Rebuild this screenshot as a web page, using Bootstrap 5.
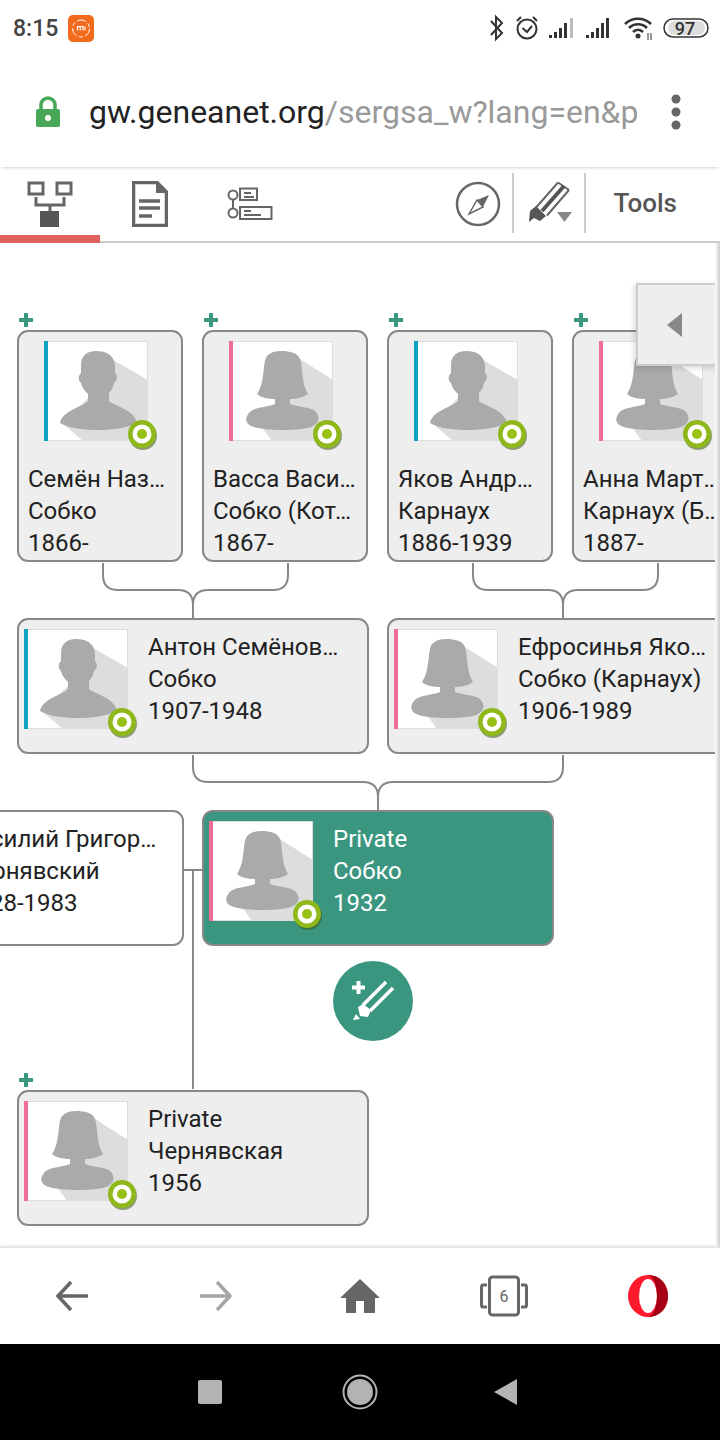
<!DOCTYPE html>
<html lang="en">
<head>
<meta charset="utf-8">
<title>Geneanet tree</title>
<link href="https://cdn.jsdelivr.net/npm/bootstrap@5.3.0/dist/css/bootstrap.min.css" rel="stylesheet">
<style>
html,body{margin:0;width:720px;height:1440px;overflow:hidden;background:#fff;font-family:Roboto,"Noto Sans",sans-serif}
.screen{width:720px;height:1440px}
.status-row{height:56px;padding:0 11px 0 13px;flex:none}
.clock{font-size:23px;font-weight:500;color:#444;line-height:1;width:55px}
.gap-a{margin-left:6px}.gap-b{margin-left:5px}.gap-c{margin-left:9px}.gap-d{margin-left:11px}.gap-e{margin-left:10px}
.url-row{height:111px;flex:none;padding:0 0 0 35px;box-shadow:0 3px 3px -2px rgba(0,0,0,.18);position:relative;z-index:3;background:#fff}
.url-text{font-size:32px;color:#999;width:548px;margin-left:28px;white-space:nowrap;overflow:hidden;line-height:40px}
.url-text b{font-weight:400;color:#222}
.menu-dots{margin-left:33px}
.tab-row{height:76px;flex:none;border-bottom:2px solid #ccc;background:#fff;position:relative;z-index:2}
.tab-item{height:74px;width:100px;position:relative}
.tab-item.on::after{content:"";position:absolute;left:0;right:0;bottom:-2px;height:8px;background:#e0635f}
.tab-tail{padding-right:43px;height:74px}
.tool-cell{height:60px;margin-top:-3px;border-left:2px solid #ccc}
.tool-pen{margin-left:11px;padding:0 10px 0 14px}
.tools-label{font-size:26px;font-weight:500;color:#555;padding-left:27px;line-height:1}
.tree-canvas{height:1004px;flex:none;position:relative;overflow:hidden;background:#fff}
.tree-canvas::after{content:"";position:absolute;top:0;bottom:0;right:0;width:5px;background:linear-gradient(90deg,#fff,#ccc);z-index:4}
.wires{position:absolute;left:0;top:0}
.person{position:absolute;border:2px solid #888;border-radius:11px;background:#eee;color:#222;font-size:24px;line-height:32px}
.person.upright{width:166px;height:232px;padding:9px 0 0 25px}
.person.wide{width:352px;height:136px;padding:9px 0 0 5px;gap:20px}
.person.plain{background:#fff}
.person.self{background:#3b9680;color:#fff}
.person-lines{white-space:nowrap}
.person.upright .person-lines{margin:22px 0 0 -16px;height:96px}
.person.wide .person-lines{margin-top:2px}
.line-clip{display:block;overflow:hidden;text-overflow:ellipsis;white-space:nowrap;width:146px}
.person.wide .line-clip{width:195px}
.portrait{width:104px;height:100px;position:relative;flex:none}
.adder{position:absolute}
.slide-panel{position:absolute;left:636px;top:40px;width:84px;height:83px;background:#eee;border:2px solid #ccc;border-right:0;box-shadow:-2px 2px 6px rgba(0,0,0,.15);z-index:3}
.fab{position:absolute;left:333px;top:718px;width:80px;height:80px;background:#3b9680}
.nav-row{height:97px;flex:none;background:#fff;border-top:1px solid #e5e5e5;box-shadow:0 -1px 3px rgba(0,0,0,.12);position:relative;z-index:3}
.nav-cell{width:144px}
.sys-row{height:96px;flex:none;background:#000}
.sys-cell{width:150px}
.count-num{font-family:Roboto,sans-serif;font-size:16px;fill:#666}
.batt-num{font-family:Roboto,sans-serif;font-size:18px;font-weight:500;fill:#333}
.bar-m,.bar-f{position:absolute;left:0;top:0;width:4px;height:100px}
.bar-m{background:#0ea3bf}.bar-f{background:#ee6d99}
.badge-dot{position:absolute;left:83px;top:78px}
</style>
</head>
<body>
<svg width="0" height="0" style="position:absolute" aria-hidden="true">
<defs>
<symbol id="man" viewBox="0 0 104 100">
<rect width="104" height="100" fill="#fff"/>
<path d="M69 19L104 39V100H39L19 83L60 40Z" fill="#ddd"/>
<path d="M37 24C37 14 44 10 52 10C62 10 70 14 71 24L71 32C74 34 73 40 70 42C69 47 67 50 65 52L65 60C70 65 90 68 93 82C80 88 66 89 53 89C38 89 25 87 16 82C18 70 38 66 44 60L44 53C41 50 38 47 37 42C34 40 34 34 37 32Z" fill="#aaa"/>
<path d="M0 0H104V100H0Z" fill="none" stroke="#ddd" stroke-width="2"/>
</symbol>
<symbol id="woman" viewBox="0 0 104 100">
<rect width="104" height="100" fill="#fff"/>
<path d="M71 18L104 39V100H43L33 86L60 40Z" fill="#ddd"/>
<path d="M36 20C37 13 44 10 52 10C61 10 69 12 71 18C74 26 72 42 79 53C74 57 66 58 61 58L61 63C68 66 82 66 86 70C92 76 90 83 82 86C72 90 36 90 25 86C17 84 15 78 20 72C24 66 40 66 46 63L46 58C40 58 32 57 28 53C35 43 34 28 36 20Z" fill="#aaa"/>
<path d="M0 0H104V100H0Z" fill="none" stroke="#ddd" stroke-width="2"/>
</symbol>
<symbol id="dot" viewBox="0 0 32 32">
<circle cx="16" cy="17" r="14" fill="#3a5a10" opacity=".55"/>
<circle cx="15" cy="15" r="14" fill="#8fb81a"/>
<circle cx="15" cy="15" r="9.5" fill="#fff"/>
<circle cx="15" cy="15" r="5" fill="#98c015"/>
</symbol>
<symbol id="cross" viewBox="0 0 14 14"><path d="M5 0H9V5H14V9H9V14H5V9H0V5H5Z" fill="#3b9680"/></symbol>
</defs>
</svg>

<div class="screen d-flex flex-column">
  <div class="status-row d-flex align-items-center">
    <span class="clock">8:15</span>
    <svg width="26" height="27" viewBox="0 0 26 27"><rect width="26" height="27" rx="5" fill="#f26a1b"/><circle cx="13" cy="13.500" r="8.500" fill="none" stroke="#fff" stroke-width="1" stroke-dasharray="9 2.500 4 2.500"/><path d="M9.500 15.500V11.500H15V15.500M12.200 11.500V15.500M17 11.500V15.500" fill="none" stroke="#fff" stroke-width="1.200"/></svg>
    <div class="ms-auto d-flex align-items-center">
      <svg width="18" height="28" viewBox="0 0 18 28"><path d="M3 7L14 19L8 25V3L14 9L3 21" fill="none" stroke="#333" stroke-width="2"/></svg>
      <svg width="30" height="28" class="gap-a" viewBox="0 0 30 28"><circle cx="15" cy="15" r="9.500" fill="none" stroke="#333" stroke-width="2"/><path d="M10.500 14L15 18L20 12M5 7L9 3M25 7L21 3" fill="none" stroke="#333" stroke-width="2"/></svg>
      <svg width="28" height="24" class="gap-b" viewBox="0 0 28 24"><path d="M2 19h3v3H2zM7 16h3v6H7zM12 12h3v10h-3zM17 7h3v15h-3z" fill="#333"/><path d="M23 2h3v20h-3z" fill="#bbb"/></svg>
      <svg width="28" height="24" class="gap-c" viewBox="0 0 28 24"><path d="M2 19h3v3H2zM7 16h3v6H7zM12 12h3v10h-3zM17 7h3v15h-3zM22 2h3v20h-3z" fill="#333"/></svg>
      <svg width="30" height="26" class="gap-d" viewBox="0 0 30 26"><path d="M2 9C9 2 21 2 28 9M6 13C11 8 19 8 24 13M10 17C13 14 17 14 20 17" fill="none" stroke="#333" stroke-width="2.600"/><circle cx="15" cy="21" r="2.500" fill="#333"/><path d="M25 18v7M28 18v7" stroke="#333" stroke-width="1"/></svg>
      <svg width="46" height="24" class="gap-e" viewBox="0 0 46 24"><rect x="1" y="3" width="44" height="18" rx="9" fill="#fff" stroke="#333" stroke-width="1.500"/><path d="M5 12a7 7 0 0 1 7-7h23a7 7 0 0 1 0 14H12a7 7 0 0 1-7-7Z" fill="#ddd"/><text x="22" y="18.500" text-anchor="middle" class="batt-num">97</text></svg>
    </div>
  </div>

  <div class="url-row d-flex align-items-center">
    <svg width="26" height="32" viewBox="0 0 26 32"><path d="M6 14V9a7 7 0 0 1 14 0v5" fill="none" stroke="#47a957" stroke-width="3.500"/><rect x="1" y="13" width="24" height="18" rx="2" fill="#47a957"/><circle cx="13" cy="22" r="3" fill="#fff"/></svg>
    <div class="url-text"><b>gw.geneanet.org</b>/sergsa_w?lang=en&amp;p</div>
    <svg class="menu-dots" width="12" height="36" viewBox="0 0 12 36"><circle cx="6" cy="5" r="4.500" fill="#666"/><circle cx="6" cy="18" r="4.500" fill="#666"/><circle cx="6" cy="31" r="4.500" fill="#666"/></svg>
  </div>

  <div class="tab-row d-flex">
    <div class="tab-item on d-flex align-items-center justify-content-center">
      <svg width="46" height="46" viewBox="0 0 46 46"><path d="M2 2h14v11H2zM30 2h14v11H30z" fill="none" stroke="#666" stroke-width="3"/><path d="M9 16v8h28v-8M23 24v8" fill="none" stroke="#666" stroke-width="3"/><rect x="13" y="30" width="19" height="16" fill="#555"/></svg>
    </div>
    <div class="tab-item d-flex align-items-center justify-content-center">
      <svg width="36" height="46" viewBox="0 0 36 46"><path d="M1.500 1.500H25L34.500 11V44.500H1.500Z" fill="none" stroke="#666" stroke-width="3.500"/><path d="M24 1V12H35Z" fill="#666"/><path d="M7 20H28M7 27H28M7 35H20" stroke="#666" stroke-width="3.500"/></svg>
    </div>
    <div class="tab-item d-flex align-items-center justify-content-center">
      <svg width="46" height="34" viewBox="0 0 46 34"><circle cx="6" cy="8" r="4.500" fill="none" stroke="#666" stroke-width="2"/><circle cx="6" cy="26" r="4.500" fill="none" stroke="#666" stroke-width="2"/><path d="M6 12v10" stroke="#666" stroke-width="2"/><path d="M13 1.500H30V13H13zM13 20H44.500V32H13z" fill="none" stroke="#666" stroke-width="2"/><path d="M17 6H24M17 10H27M17 24H24M17 28H34" stroke="#666" stroke-width="2"/></svg>
    </div>
    <div class="tab-tail ms-auto d-flex align-items-center">
      <svg width="46" height="46" viewBox="0 0 46 46"><circle cx="23" cy="23" r="21" fill="none" stroke="#666" stroke-width="2.500"/><path d="M34 14L22 19L28 26Z" fill="#666"/><path d="M14 33L22 19L28 26Z" fill="#fff" stroke="#666" stroke-width="1.500"/></svg>
      <div class="tool-cell tool-pen d-flex align-items-center">
        <svg width="46" height="46" viewBox="0 0 46 46"><path d="M8.500 27L30 2.500M19 35.500L41 10M30 2.500L41 10" fill="none" stroke="#666" stroke-width="2"/><path d="M14 31L36 6" fill="none" stroke="#555" stroke-width="4"/><path d="M2 31L8 26L18 36L12 41L6 38L1 42Z" fill="#555"/><path d="M29 32H44L36.500 42Z" fill="#888"/></svg>
      </div>
      <div class="tool-cell d-flex align-items-center"><span class="tools-label">Tools</span></div>
    </div>
  </div>

  <div class="tree-canvas">
    <svg class="wires" width="720" height="1004" viewBox="0 0 720 1004" fill="none" stroke="#888" stroke-width="2">
      <path d="M103 320V332Q103 347 118 347H178Q193 347 193 362V375"/>
      <path d="M288 320V332Q288 347 273 347H208Q193 347 193 362"/>
      <path d="M473 320V332Q473 347 488 347H548Q563 347 563 362V375"/>
      <path d="M658 320V332Q658 347 643 347H578Q563 347 563 362"/>
      <path d="M193 512V524Q193 539 208 539H363Q378 539 378 554V567"/>
      <path d="M563 512V524Q563 539 548 539H393Q378 539 378 554"/>
      <path d="M184 627H203M193 627V846"/>
    </svg>

    <svg class="adder" style="left:19px;top:70px" width="14" height="14"><use href="#cross"/></svg>
    <svg class="adder" style="left:204px;top:70px" width="14" height="14"><use href="#cross"/></svg>
    <svg class="adder" style="left:389px;top:70px" width="14" height="14"><use href="#cross"/></svg>
    <svg class="adder" style="left:574px;top:70px" width="14" height="14"><use href="#cross"/></svg>
    <svg class="adder" style="left:19px;top:830px" width="14" height="14"><use href="#cross"/></svg>

    <div class="person upright" style="left:17px;top:87px">
      <div class="portrait"><svg width="104" height="100"><use href="#man"/></svg><span class="bar-m"></span><svg class="badge-dot" width="32" height="32"><use href="#dot"/></svg></div>
      <div class="person-lines"><span class="line-clip">Семён Назарович</span><span class="line-clip">Собко</span><span class="line-clip">1866-</span></div>
    </div>
    <div class="person upright" style="left:202px;top:87px">
      <div class="portrait"><svg width="104" height="100"><use href="#woman"/></svg><span class="bar-f"></span><svg class="badge-dot" width="32" height="32"><use href="#dot"/></svg></div>
      <div class="person-lines"><span class="line-clip">Васса Васильевна</span><span class="line-clip">Собко (Котенко)</span><span class="line-clip">1867-</span></div>
    </div>
    <div class="person upright" style="left:387px;top:87px">
      <div class="portrait"><svg width="104" height="100"><use href="#man"/></svg><span class="bar-m"></span><svg class="badge-dot" width="32" height="32"><use href="#dot"/></svg></div>
      <div class="person-lines"><span class="line-clip">Яков Андреевич</span><span class="line-clip">Карнаух</span><span class="line-clip">1886-1939</span></div>
    </div>
    <div class="person upright" style="left:572px;top:87px">
      <div class="portrait"><svg width="104" height="100"><use href="#woman"/></svg><span class="bar-f"></span><svg class="badge-dot" width="32" height="32"><use href="#dot"/></svg></div>
      <div class="person-lines"><span class="line-clip">Анна Мартыновна</span><span class="line-clip">Карнаух (Бондарь)</span><span class="line-clip">1887-</span></div>
    </div>

    <div class="person wide d-flex" style="left:17px;top:375px">
      <div class="portrait"><svg width="104" height="100"><use href="#man"/></svg><span class="bar-m"></span><svg class="badge-dot" width="32" height="32"><use href="#dot"/></svg></div>
      <div class="person-lines"><span class="line-clip">Антон Семёнович</span><span class="line-clip">Собко</span><span class="line-clip">1907-1948</span></div>
    </div>
    <div class="person wide d-flex" style="left:387px;top:375px">
      <div class="portrait"><svg width="104" height="100"><use href="#woman"/></svg><span class="bar-f"></span><svg class="badge-dot" width="32" height="32"><use href="#dot"/></svg></div>
      <div class="person-lines"><span class="line-clip">Ефросинья Яковлевна</span><span class="line-clip">Собко (Карнаух)</span><span class="line-clip">1906-1989</span></div>
    </div>

    <div class="person wide plain d-flex" style="left:-168px;top:567px">
      <div class="portrait"></div>
      <div class="person-lines"><span class="line-clip">Василий Григорьевич</span><span class="line-clip">Чернявский</span><span class="line-clip">1928-1983</span></div>
    </div>
    <div class="person wide self d-flex" style="left:202px;top:567px">
      <div class="portrait"><svg width="104" height="100"><use href="#woman"/></svg><span class="bar-f"></span><svg class="badge-dot" width="32" height="32"><use href="#dot"/></svg></div>
      <div class="person-lines"><span class="line-clip">Private</span><span class="line-clip">Собко</span><span class="line-clip">1932</span></div>
    </div>

    <div class="fab rounded-circle d-flex align-items-center justify-content-center">
      <svg width="46" height="46" viewBox="0 0 46 46"><path d="M6.500 3H10.500V7.500H15V11.500H10.500V16H6.500V11.500H2V7.500H6.500Z" fill="#fff"/><path d="M13 27L36 4M20 33L43 10" stroke="#fff" stroke-width="3.500" fill="none"/><path d="M8 29L13 26L21 32L18 39L10 38Z" fill="#fff"/><path d="M3 42L6 36L10 41Z" fill="#fff"/></svg>
    </div>

    <div class="person wide d-flex" style="left:17px;top:847px">
      <div class="portrait"><svg width="104" height="100"><use href="#woman"/></svg><span class="bar-f"></span><svg class="badge-dot" width="32" height="32"><use href="#dot"/></svg></div>
      <div class="person-lines"><span class="line-clip">Private</span><span class="line-clip">Чернявская</span><span class="line-clip">1956</span></div>
    </div>

    <div class="slide-panel d-flex align-items-center justify-content-center">
      <svg width="16" height="24" class="me-2" viewBox="0 0 16 24"><path d="M15 0V24L0 12Z" fill="#888"/></svg>
    </div>
  </div>

  <div class="nav-row d-flex align-items-center">
    <div class="nav-cell d-flex justify-content-center"><svg width="34" height="32" viewBox="0 0 34 32"><path d="M16 2L3 16L16 30M3 16H33" fill="none" stroke="#666" stroke-width="3.500"/></svg></div>
    <div class="nav-cell d-flex justify-content-center"><svg width="34" height="32" viewBox="0 0 34 32"><path d="M18 2L31 16L18 30M31 16H1" fill="none" stroke="#a5a5a5" stroke-width="3.500"/></svg></div>
    <div class="nav-cell d-flex justify-content-center"><svg width="40" height="36" viewBox="0 0 40 36"><path d="M20 1L40 20H35V35H24V23H16V35H6V20H0Z" fill="#666"/></svg></div>
    <div class="nav-cell d-flex justify-content-center"><svg width="48" height="42" viewBox="0 0 48 42"><rect x="9.500" y="2" width="29" height="38" rx="3" fill="none" stroke="#666" stroke-width="3"/><path d="M7 10H3Q1.500 10 1.500 12V30Q1.500 32 3 32H7M41 10H45Q46.500 10 46.500 12V30Q46.500 32 45 32H41" fill="none" stroke="#666" stroke-width="3"/><text x="24" y="27" text-anchor="middle" class="count-num">6</text></svg></div>
    <div class="nav-cell d-flex justify-content-center"><svg width="40" height="42" viewBox="0 0 40 42"><ellipse cx="20" cy="21" rx="20" ry="21" fill="#ff1b2d"/><ellipse cx="20" cy="21" rx="9" ry="17" fill="#fff"/><path d="M20 0C32 0 40 9 40 21C40 33 32 42 20 42C26 40 29 31 29 21C29 11 26 2 20 0Z" fill="#a70014"/></svg></div>
  </div>

  <div class="sys-row d-flex align-items-center justify-content-center">
    <div class="sys-cell d-flex justify-content-center"><svg width="24" height="24" viewBox="0 0 24 24"><rect width="24" height="24" rx="2" fill="#b3b3b3"/></svg></div>
    <div class="sys-cell d-flex justify-content-center"><svg width="36" height="36" viewBox="0 0 36 36"><circle cx="18" cy="18" r="16.500" fill="none" stroke="#b3b3b3" stroke-width="2"/><circle cx="18" cy="18" r="13" fill="#b3b3b3"/></svg></div>
    <div class="sys-cell d-flex justify-content-center"><svg class="me-2" width="24" height="26" viewBox="0 0 24 26"><path d="M23 0V26L0 13Z" fill="#b3b3b3"/></svg></div>
  </div>
</div>
</body>
</html>
